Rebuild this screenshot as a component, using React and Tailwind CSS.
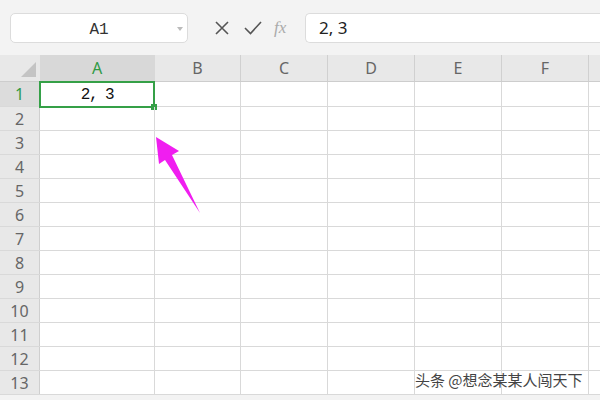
import React from "react";

const cols = [
  { l: "A", w: "w-[115px]" },
  { l: "B", w: "w-[86px]" },
  { l: "C", w: "w-[87px]" },
  { l: "D", w: "w-[87px]" },
  { l: "E", w: "w-[87px]" },
  { l: "F", w: "w-[87px]" },
];

const rows = [1, 2, 3, 4, 5, 6, 7, 8, 9, 10, 11, 12, 13];

export default function App() {
  return (
    <div className="relative w-[600px] h-[400px] overflow-hidden bg-[#f3f3f3]" style={{ fontFamily: '"Noto Sans", "Liberation Sans", sans-serif' }}>
      {/* toolbar */}
      <div className="flex items-center h-[55px] pl-[10px]">
        <div className="relative flex items-center justify-center w-[178px] h-[30px] bg-white rounded-[5px] border border-[#dcdcdc]">
          <span className="text-[16px] leading-none pt-[4px] text-[#333]" style={{ fontFamily: '"Liberation Mono", monospace' }}>A1</span>
          <svg className="absolute right-[4px] top-[13px]" width="6" height="4" viewBox="0 0 6 4"><path d="M0 0 L6 0 L3 4 Z" fill="#bbb" /></svg>
        </div>
        <div className="flex items-center w-[117px] pl-[26px] gap-[14px]">
          <svg width="16" height="16" viewBox="0 0 16 16"><path d="M2 2 L14 14 M14 2 L2 14" stroke="#555" strokeWidth="1.6" /></svg>
          <svg width="18" height="14" viewBox="0 0 18 14"><path d="M1 7 L6.5 12.5 L17 1" stroke="#555" strokeWidth="1.6" fill="none" /></svg>
          <span className="text-[17px] italic text-[#aaa] -ml-[2px]" style={{ fontFamily: '"Liberation Serif", serif' }}>fx</span>
        </div>
        <div className="flex items-center flex-1 h-[30px] bg-white rounded-l-[5px] border border-r-0 border-[#dcdcdc] pl-[13px]">
          <span className="text-[17px] text-[#222]">2, 3</span>
        </div>
      </div>

      {/* header row */}
      <div className="flex h-[27px] bg-[#e8e8e8] border-b border-[#cdcdcd]">
        <div className="relative w-[40px] h-full">
          <svg className="absolute left-[21px] top-[7px]" width="15" height="15" viewBox="0 0 15 15"><path d="M15 0 L15 15 L0 15 Z" fill="#c4c4c4" /></svg>
        </div>
        {cols.map((c, i) => (
          <div
            key={c.l}
            className={`${c.w} h-full flex items-center justify-center text-[16px] border-r ${i === 0 ? "bg-[#d8d8d8] text-[#2f9a45] border-[#d8d8d8]" : "text-[#666] border-[#d0d0d0]"}`}
          >
            {c.l}
          </div>
        ))}
        <div className="flex-1" />
      </div>

      {/* body rows */}
      {rows.map((r) => (
        <div key={r} className={`flex ${r === 1 ? "h-[25px]" : "h-[24px]"} bg-white border-b border-[#d9d9d9]`}>
          <div className={`w-[40px] h-full flex items-center justify-center text-[16px] border-r border-[#cfcfcf] ${r === 1 ? "bg-[#dcdcdc] text-[#2f9a45]" : "bg-[#e8e8e8] text-[#666]"}`}>
            {r}
          </div>
          {cols.map((c, i) => (
            <div key={c.l} className={`relative ${c.w} h-full border-r border-[#d9d9d9]`}>
              {r === 1 && i === 0 && (
                <div className="absolute -left-[1px] -top-[1px] w-[116px] h-[27px] border-2 border-[#35a047] flex items-center justify-center">
                  <span className="text-[16px] tracking-[-1.5px] text-[#111] pt-[1px]" style={{ fontFamily: '"Liberation Mono", monospace' }}>2, 3</span>
                  <div className="absolute -right-[4px] -bottom-[4px] w-[6px] h-[6px] bg-[#35a047]" />
                </div>
              )}
            </div>
          ))}
          <div className="flex-1" />
        </div>
      ))}

      {/* arrow annotation */}
      <svg className="absolute left-0 top-0 pointer-events-none" width="600" height="400" viewBox="0 0 600 400">
        <path d="M156 137 L179 151 L172 155 L200 213 L165 160 L159 164 Z" fill="#f01ef0" />
      </svg>

      {/* watermark */}
      <div
        className="absolute left-[415px] top-[369px] text-[15px] text-[#444] whitespace-nowrap"
        style={{ fontFamily: '"Noto Sans CJK SC", sans-serif', textShadow: "0 0 2px #fff" }}
      >
        头条 @想念某某人闯天下
      </div>
    </div>
  );
}
